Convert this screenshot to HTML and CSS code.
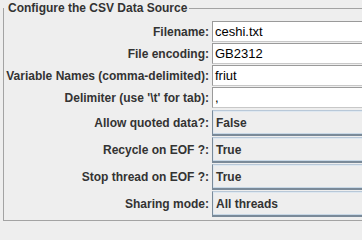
FILE: index.html
```html
<!DOCTYPE html>
<html>
<head>
<meta charset="utf-8">
<link rel="stylesheet" href="styles.css">
</head>
<body>
<fieldset class="panel">
  <legend class="panel-title">Configure the CSV Data Source</legend>
  <div class="form">
    <label class="lbl">Filename:</label>
    <div class="field text">ceshi.txt</div>
    <label class="lbl">File encoding:</label>
    <div class="field text">GB2312</div>
    <label class="lbl">Variable Names (comma-delimited):</label>
    <div class="field text">friut</div>
    <label class="lbl">Delimiter (use '\t' for tab):</label>
    <div class="field text">,</div>
    <label class="lbl combo-lbl">Allow quoted data?:</label>
    <div class="field combo">False</div>
    <label class="lbl combo-lbl">Recycle on EOF ?:</label>
    <div class="field combo">True</div>
    <label class="lbl combo-lbl">Stop thread on EOF ?:</label>
    <div class="field combo">True</div>
    <label class="lbl combo-lbl">Sharing mode:</label>
    <div class="field combo">All threads</div>
  </div>
</fieldset>
</body>
</html>
```

FILE: styles.css
```css
html, body {
  margin: 0;
  padding: 0;
  background: #eeeeee;
  overflow: hidden;
  width: 362px;
  height: 222px;
}

body {
  font-family: "Liberation Sans", Arial, sans-serif;
  font-size: 12px;
  color: #333333;
}

.panel {
  margin: 1px 0 0 3px;
  padding: 6px 0 3px 0;
  width: 359px;
  border: 1px solid #a3a3a3;
  border-right: none;
  box-sizing: border-box;
  min-width: 0;
}

.panel-title {
  padding: 0 2px 0 4px;
  margin-left: 0;
  font-weight: bold;
  line-height: 14px;
  color: #333333;
}

.form {
  display: grid;
  grid-template-columns: 208px 1fr;
  grid-template-rows: 21px 21px 21px 22px 26px 26px 26px 26px;
  row-gap: 1px;
}

.lbl {
  font-weight: bold;
  text-align: right;
  padding-right: 3px;
  display: flex;
  align-items: center;
  justify-content: flex-end;
  white-space: nowrap;
}

.field {
  box-sizing: border-box;
  display: flex;
  align-items: center;
  white-space: nowrap;
}

.text {
  background: #ffffff;
  border-top: 1px solid #9a9a9a;
  border-left: 1px solid #9a9a9a;
  border-bottom: 1px solid #c8c8c8;
  padding-left: 2px;
  color: #000000;
  font-size: 13px;
  height: 21px;
  align-self: start;
}

.combo {
  background: #eeeeee;
  border-top: 1px solid #b8c8d8;
  border-left: 1px solid #7a8a99;
  border-bottom: 2px solid #7a8a99;
  box-shadow: inset 0 -1px 0 #c8d8e6, inset 1px 1px 0 #dfe8f0;
  padding-left: 3px;
  font-weight: bold;
  color: #333333;
}
```
